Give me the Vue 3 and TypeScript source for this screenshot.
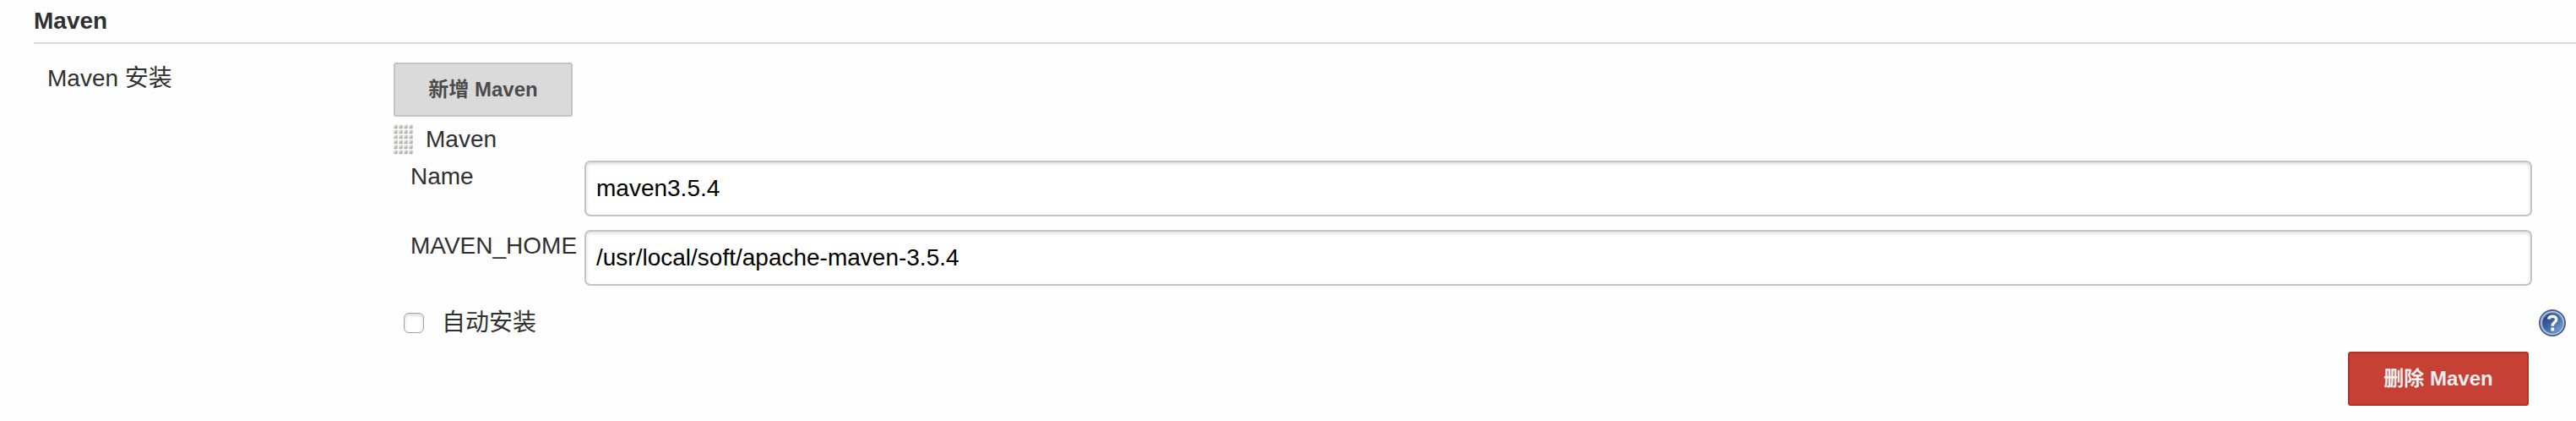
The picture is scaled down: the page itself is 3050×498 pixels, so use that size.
<script setup lang="ts">
import { ref } from 'vue'

interface Field {
  label: string
  value: string
}

const fields = ref<Field[]>([
  { label: 'Name', value: 'maven3.5.4' },
  { label: 'MAVEN_HOME', value: '/usr/local/soft/apache-maven-3.5.4' },
])
const autoInstall = ref(false)
</script>

<template>
  <section class="config">
    <h2 class="heading">Maven</h2>
    <div class="body">
      <div class="side-label">Maven 安装</div>
      <div class="content">
        <button class="btn add" type="button">新增 Maven</button>
        <div class="drag-row">
          <svg class="grip" width="24" height="38" viewBox="0 0 24 38" aria-hidden="true">
            <defs>
              <linearGradient id="dot" x1="0" y1="0" x2="1" y2="1">
                <stop offset="0.1" stop-color="#f4f4f2" />
                <stop offset="0.65" stop-color="#b4b4b0" />
                <stop offset="1" stop-color="#a6a6a1" />
              </linearGradient>
            </defs>
            <template v-for="row in 6" :key="row">
              <rect
                v-for="col in 4"
                :key="col"
                :x="(col - 1) * 6"
                :y="(row - 1) * 6 + 1.5"
                width="4.6"
                height="4.8"
                rx="0.8"
                fill="url(#dot)"
              />
            </template>
          </svg>
          <span>Maven</span>
        </div>
        <div v-for="field in fields" :key="field.label" class="field">
          <label class="field-label">{{ field.label }}</label>
          <input v-model="field.value" class="text-input" type="text" />
        </div>
        <div class="auto-row">
          <input v-model="autoInstall" class="check" type="checkbox" />
          <span class="auto-label">自动安装</span>
          <svg class="help" width="32" height="32" viewBox="0 0 32 32" aria-label="Help">
            <defs>
              <linearGradient id="disc" x1="0" y1="0" x2="1" y2="1">
                <stop offset="0.15" stop-color="#244785" />
                <stop offset="0.55" stop-color="#446da8" />
                <stop offset="1" stop-color="#8bb0d8" />
              </linearGradient>
            </defs>
            <circle cx="16" cy="16" r="15" fill="#c3d1e3" stroke="#42639a" stroke-width="2" />
            <circle cx="16" cy="16" r="12" fill="url(#disc)" stroke="#6886b3" stroke-width="1.4" />
            <path
              d="M11.6 11.4 C12.2 7.2 20.8 7 20.8 11.8 C20.8 15.4 16.2 15 16.2 19.8"
              fill="none"
              stroke="#f3f6fa"
              stroke-width="3.5"
            />
            <rect x="14.3" y="21.6" width="3.9" height="4" rx="0.8" fill="#f3f6fa" />
          </svg>
        </div>
        <button class="btn remove" type="button">删除 Maven</button>
      </div>
    </div>
  </section>
</template>

<style>
body {
  margin: 0;
  background: #fefefe;
}
</style>

<style scoped>
.config {
  box-sizing: border-box;
  height: 498px;
  padding: 9px 0 0 40px;
  overflow: hidden;
  color: #303030;
  font: 28px/32px "Liberation Sans", "Noto Sans CJK SC", sans-serif;
}
.heading {
  margin: 0;
  padding-bottom: 9px;
  border-bottom: 2px solid #d9d9d9;
  font-size: 28px;
  line-height: 32px;
  font-weight: bold;
}
.body {
  display: grid;
  grid-template-columns: 410px 1fr;
  padding: 22px 12px 0 16px;
}
.side-label {
  padding-top: 3px;
}
.content {
  display: flex;
  flex-direction: column;
  align-items: stretch;
}
.btn {
  box-sizing: border-box;
  height: 64px;
  padding: 0;
  border: 2px solid;
  border-radius: 3px;
  font: bold 24px/28px "Liberation Sans", "Noto Sans CJK SC", sans-serif;
}
.add {
  align-self: flex-start;
  width: 212px;
  color: #4b4b4b;
  background: #dadada;
  border-color: #c3c3c3;
}
.drag-row {
  display: flex;
  gap: 14px;
  height: 52px;
  box-sizing: border-box;
  padding-top: 11px;
}
.grip {
  margin-top: -3px;
}
.field {
  display: flex;
  height: 66px;
  margin: 0 40px 16px 20px;
}
.field-label {
  width: 206px;
  padding-top: 3px;
}
.text-input {
  box-sizing: border-box;
  flex: 1;
  min-width: 0;
  height: 66px;
  margin: 0;
  padding: 0 12px;
  border: 2px solid #c3c3c3;
  border-radius: 7px;
  outline: none;
  color: #000;
  background: #fff;
  box-shadow: inset 0 2px 4px rgba(0, 0, 0, 0.13);
  font: 28px/32px "Liberation Sans", "Noto Sans CJK SC", sans-serif;
}
.auto-row {
  display: flex;
  align-items: center;
  height: 32px;
  margin: 12px 0 18px 12px;
}
.check {
  appearance: none;
  box-sizing: border-box;
  width: 24px;
  height: 24px;
  margin: 0;
  border: 1.5px solid #a3a3a3;
  border-radius: 6px;
  background: #fff;
  box-shadow: inset 0 2px 4px rgba(0, 0, 0, 0.16);
}
.auto-label {
  margin-left: 21px;
}
.help {
  margin-left: auto;
}
.remove {
  align-self: flex-end;
  width: 214px;
  margin-right: 44px;
  color: #eee;
  background: #c64035;
  border-color: #b33127;
}
</style>
